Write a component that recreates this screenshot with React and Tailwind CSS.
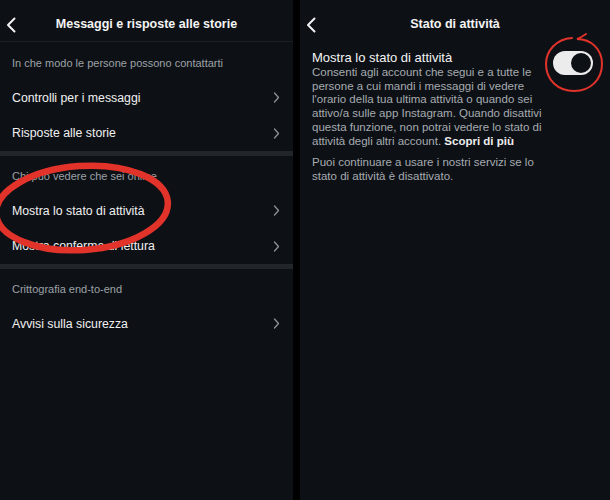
const font = { fontFamily: '"Liberation Sans", Arial, sans-serif' };

function Back() {
  return (
    <svg width="10" height="16" viewBox="0 0 10 16" fill="none">
      <path d="M8.5 1.5L2 8l6.5 6.5" stroke="#f2f2f2" strokeWidth="2" strokeLinecap="round" strokeLinejoin="round" />
    </svg>
  );
}

function Chevron() {
  return (
    <svg width="7" height="11" viewBox="0 0 7 11" fill="none">
      <path d="M1.5 1l4 4.5-4 4.5" stroke="#8e9297" strokeWidth="1.3" strokeLinecap="round" strokeLinejoin="round" />
    </svg>
  );
}

function Header({ title }) {
  return (
    <div className="h-[41px] pt-[11px] grid grid-cols-[30px_1fr_30px] items-start">
      <div className="h-[28px] flex items-center pl-[6px]">
        <Back />
      </div>
      <div className="h-[27px] flex items-center justify-center text-[12.5px] font-bold text-[#f4f4f4]">
        {title}
      </div>
      <div />
    </div>
  );
}

function Label({ children, first }) {
  return (
    <div className={`${first ? 'pt-[14px] pb-[10px]' : 'pt-[13px] pb-[10px]'} px-[12px] text-[11px] leading-[14px] text-[#9da1a6]`}>
      {children}
    </div>
  );
}

function Item({ children }) {
  return (
    <div className="h-[35.5px] flex items-center justify-between pl-[12px] pr-[13px] text-[12.3px] text-[#f0f0f0]">
      <span>{children}</span>
      <Chevron />
    </div>
  );
}

function Band() {
  return <div className="h-[5px] bg-[#22262b]" />;
}

const desc = [
  'Consenti agli account che segui e a tutte le',
  'persone a cui mandi i messaggi di vedere',
  "l'orario della tua ultima attività o quando sei",
  'attivo/a sulle app Instagram. Quando disattivi',
  'questa funzione, non potrai vedere lo stato di',
];

export default function App() {
  return (
    <div className="w-[610px] h-[500px] flex bg-black overflow-hidden" style={font}>
      {/* left panel */}
      <div className="relative w-[293px] h-full bg-[#0d1116]">
        <div className="border-b border-[#1c2025]">
          <Header title="Messaggi e risposte alle storie" />
        </div>
        <Label first>In che modo le persone possono contattarti</Label>
        <Item>Controlli per i messaggi</Item>
        <Item>Risposte alle storie</Item>
        <Band />
        <Label>Chi può vedere che sei online</Label>
        <Item>Mostra lo stato di attività</Item>
        <Item>Mostra conferme di lettura</Item>
        <Band />
        <Label>Crittografia end-to-end</Label>
        <Item>Avvisi sulla sicurezza</Item>

        <svg className="absolute left-0 top-0 pointer-events-none" width="293" height="500" viewBox="0 0 293 500" fill="none">
          <ellipse cx="82" cy="208" rx="86" ry="42" transform="rotate(-4 82 208)" stroke="#e2332b" strokeWidth="6.5" />
          <path d="M12 188 C 30 172, 60 166, 96 166" stroke="#e2332b" strokeWidth="4" strokeLinecap="round" />
        </svg>
      </div>

      <div className="w-[7px] h-full bg-black" />

      {/* right panel */}
      <div className="relative flex-1 h-full bg-[#0d1116]">
        <Header title="Stato di attività" />
        <div className="flex items-start pl-[12px] pr-[17px] pt-[9px]">
          <div className="flex-1">
            <div className="text-[13px] leading-[16px] text-[#f4f4f4]">Mostra lo stato di attività</div>
            <div className="text-[11.5px] leading-[13.7px] text-[#a7abb0]">
              {desc.map((l) => (
                <div key={l}>{l}</div>
              ))}
              <div>
                attività degli altri account. <span className="text-[#eeeeee] font-semibold">Scopri di più</span>
              </div>
            </div>
            <div className="mt-[8px] text-[11.5px] leading-[13.7px] text-[#a7abb0]">
              <div>Puoi continuare a usare i nostri servizi se lo</div>
              <div>stato di attività è disattivato.</div>
            </div>
          </div>
          <div className="mt-[1px] w-[40px] h-[24px] rounded-full bg-[#ececec] flex items-center justify-end pr-[2px]">
            <div className="w-[20px] h-[20px] rounded-full bg-[#0d1116]" />
          </div>
        </div>

        <svg className="absolute left-0 top-0 pointer-events-none" width="310" height="500" viewBox="0 0 310 500" fill="none">
          <path
            d="M272 38 C 256 39, 246 51, 246 64 C 246 80, 258 91, 274 91 C 291 91, 302 79, 302 64 C 302 49, 291 39, 277 39 C 280 38, 283 36, 286 34"
            stroke="#e2332b"
            strokeWidth="2"
            strokeLinecap="round"
          />
        </svg>
      </div>
    </div>
  );
}
